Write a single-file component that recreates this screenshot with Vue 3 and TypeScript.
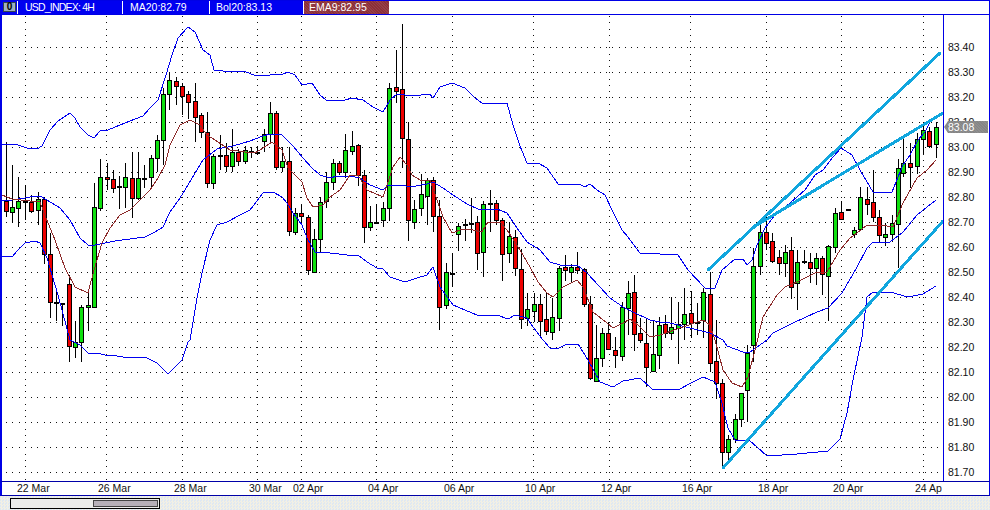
<script setup lang="ts">
type Kind = 'g' | 'r' | 'd'
type Candle = [number, number, number, number, number, Kind]

const candles: Candle[] = [
  [6,201,211,142,217,'r'],[12,207,212,165,223,'g'],[18,201,208,177,227,'g'],[25,201,202,185,220,'d'],[31,202,211,195,213,'r'],[38,199,210,192,225,'g'],
  [44,199,254,197,264,'r'],[50,254,302,233,318,'r'],[56,302,303,289,321,'d'],[62,303,304,303,326,'d'],[69,284,346,275,362,'r'],[75,342,347,321,358,'g'],
  [81,307,342,305,362,'g'],[88,305,307,293,331,'g'],[94,207,307,183,308,'g'],[100,177,208,159,211,'g'],[107,177,179,163,190,'r'],[113,179,188,170,193,'r'],
  [119,186,187,176,209,'d'],[125,177,187,163,208,'g'],[132,178,198,152,218,'r'],[138,178,198,152,200,'g'],[144,178,179,165,188,'d'],[151,158,177,155,188,'g'],
  [157,140,158,135,172,'g'],[163,94,140,88,165,'g'],[169,80,94,72,110,'g'],[176,81,86,77,105,'r'],[182,86,96,83,115,'r'],[188,94,102,91,119,'r'],
  [195,101,117,83,142,'r'],[201,115,132,113,138,'r'],[207,132,183,112,188,'r'],[213,156,183,154,189,'g'],[220,155,156,135,170,'d'],[226,155,166,143,172,'r'],
  [232,152,166,129,172,'g'],[238,152,161,149,166,'r'],[245,150,161,146,164,'g'],[251,151,152,147,158,'d'],[257,152,153,146,155,'d'],[264,134,141,129,152,'g'],
  [270,113,134,102,143,'g'],[276,113,167,111,170,'r'],[282,161,167,147,172,'g'],[289,161,231,147,236,'r'],[295,213,232,208,235,'g'],[301,213,216,205,223,'r'],
  [308,217,270,215,275,'r'],[314,239,272,229,273,'g'],[320,202,239,197,253,'g'],[326,182,201,172,208,'g'],[333,163,182,159,190,'g'],[339,163,172,161,175,'r'],
  [345,150,172,134,178,'g'],[352,146,151,131,155,'g'],[358,145,175,144,186,'r'],[364,175,227,170,243,'r'],[370,222,227,206,231,'g'],[376,222,223,204,223,'d'],
  [383,208,220,202,227,'g'],[389,88,208,83,221,'g'],[396,87,91,50,103,'r'],[402,89,138,24,168,'r'],[408,139,220,122,241,'r'],[414,209,222,200,229,'g'],
  [421,194,208,174,216,'g'],[427,180,196,178,225,'g'],[433,180,216,177,232,'r'],[439,216,307,200,330,'r'],[446,272,305,263,309,'g'],[452,273,274,253,287,'d'],
  [458,226,234,223,251,'g'],[465,224,225,219,241,'d'],[471,223,224,198,233,'d'],[477,222,253,216,270,'r'],[483,204,252,201,277,'g'],[490,203,204,190,232,'d'],
  [496,203,220,200,225,'r'],[502,220,254,218,281,'r'],[509,236,253,222,263,'g'],[515,237,268,230,276,'r'],[521,269,319,249,329,'r'],[527,309,318,293,326,'g'],
  [534,304,311,293,322,'g'],[540,304,321,294,337,'r'],[546,319,331,293,335,'r'],[552,317,332,298,340,'g'],[559,268,318,266,331,'g'],[565,267,270,255,281,'r'],
  [571,267,272,264,283,'g'],[577,267,270,252,274,'r'],[584,269,304,268,307,'r'],[590,304,378,296,380,'r'],[596,358,381,325,381,'g'],[602,333,358,328,367,'g'],
  [608,333,349,322,350,'r'],[615,350,355,337,368,'r'],[622,307,356,302,361,'g'],[628,293,308,281,335,'g'],[634,292,334,275,351,'r'],[640,333,340,318,343,'r'],
  [646,343,367,318,387,'r'],[653,354,371,320,371,'g'],[659,325,355,317,369,'g'],[665,324,333,315,338,'r'],[671,327,333,297,340,'g'],[678,324,328,302,364,'g'],
  [684,314,324,288,340,'g'],[691,313,323,291,338,'r'],[697,322,323,303,335,'d'],[703,292,320,288,338,'g'],[710,294,363,272,372,'r'],[716,361,383,320,399,'r'],
  [722,383,452,379,468,'r'],[728,439,452,435,461,'g'],[735,419,439,414,443,'g'],[741,393,419,393,427,'g'],[747,353,390,345,422,'g'],[753,266,345,248,362,'g'],
  [760,232,266,225,275,'g'],[766,232,243,213,250,'r'],[772,241,261,233,263,'r'],[779,257,263,250,275,'r'],[785,252,263,245,277,'g'],[791,250,287,237,299,'r'],
  [797,262,283,250,310,'g'],[804,261,262,250,264,'d'],[810,262,268,253,283,'r'],[816,258,268,253,285,'g'],[822,258,274,256,295,'r'],[828,246,276,245,321,'g'],
  [835,213,247,208,253,'g'],[841,212,219,201,220,'r'],[848,209,210,209,210,'d'],[854,230,234,227,238,'g'],[860,197,229,187,230,'g'],[867,199,204,187,215,'r'],
  [873,202,217,170,222,'r'],[879,217,235,210,242,'r'],[885,234,237,223,246,'g'],[892,223,234,215,242,'g'],[898,168,224,159,268,'g'],[903,163,173,139,177,'g'],
  [910,163,167,143,188,'r'],[917,139,166,133,174,'g'],[923,130,139,126,154,'g'],[929,131,146,127,148,'r'],[936,127,144,122,158,'g'],
]

const upper = '2,144 15,144 27,148 37,149 42,146 50,130 58,121 64,117 70,113 75,118 80,127 88,135 94,138 100,131 108,130 120,125 130,121 143,116 150,108 158,100 166,75 172,55 178,38 188,27 195,32 203,50 210,55 214,70 223,71 243,71 257,76 270,75 283,74 288,72 295,75 302,85 312,83 320,95 326,100 345,100 352,98 363,100 373,107 383,112 390,100 397,94 412,96 430,94 433,98 440,87 452,83 465,88 475,98 482,103 507,103 513,125 520,146 527,163 538,163 547,168 558,184 579,184 585,187 590,184 597,190 605,195 613,212 622,230 628,237 640,253 660,254 678,255 688,270 705,288 715,288 722,270 735,259 743,259 747,265 752,260 757,245 765,228 775,215 790,203 805,190 815,175 823,170 833,157 841,148 852,155 860,170 873,192 892,192 898,177 903,165 910,155 918,140 925,132 930,122'
const middle = '2,200 12,200 25,198 35,196 40,196 47,200 60,208 70,220 80,238 88,245 95,245 105,243 115,241 130,239 145,237 155,232 163,227 170,212 180,198 197,170 203,160 217,149 233,146 250,141 263,136 270,134 282,135 293,146 303,158 312,168 320,175 330,178 337,176 350,176 360,178 370,185 383,190 388,185 402,185 410,187 427,184 433,182 443,188 453,195 467,204 480,210 487,209 497,209 507,213 517,228 527,242 540,250 550,262 560,265 577,265 587,273 600,287 610,298 623,307 633,312 650,320 660,322 670,323 710,333 723,340 727,346 743,352 750,352 767,340 773,333 793,323 817,312 828,308 842,293 857,267 867,248 873,242 890,242 903,232 917,215 927,207 936,200'
const lower = '2,256 12,257 18,250 25,243 35,241 40,243 47,258 58,295 70,340 80,345 88,353 97,353 105,355 117,356 123,357 147,358 157,363 168,374 182,360 188,342 190,340 197,298 202,273 210,240 217,225 227,222 240,215 250,210 263,193 273,192 282,197 287,203 293,213 302,225 307,238 315,252 330,253 347,255 358,255 367,262 377,268 383,269 390,277 405,282 417,278 427,275 433,267 440,287 453,305 477,315 497,315 508,319 515,315 527,318 533,327 543,340 550,348 557,349 567,344 578,344 588,360 600,382 613,387 623,381 640,378 652,389 678,390 693,382 703,377 715,382 722,403 728,428 735,440 750,441 757,447 767,456 797,454 828,451 840,439 847,413 853,380 862,337 867,297 873,292 890,292 908,297 923,294 936,286'
const ema = '2,195 12,199 30,201 40,202 46,218 55,240 65,268 75,287 88,293 94,270 102,243 110,228 120,215 130,210 140,200 150,190 158,178 165,165 170,145 180,125 190,120 200,125 207,135 215,140 230,150 245,152 255,153 263,148 272,142 282,150 288,168 302,182 307,198 313,207 323,205 330,197 340,190 350,175 358,175 367,190 383,197 393,167 400,157 407,165 412,175 420,180 430,180 437,200 443,217 452,233 463,229 473,230 482,232 488,222 500,222 507,230 520,250 530,267 538,282 547,293 553,297 563,287 577,280 583,287 593,312 607,323 613,328 623,323 630,319 638,325 650,337 660,335 683,327 703,320 710,325 715,340 723,370 732,383 742,387 748,377 755,350 763,317 777,295 785,287 797,282 817,272 827,272 840,250 850,238 857,233 867,225 880,225 893,227 903,203 917,178 927,170 936,160'

const trends = [
  [708, 270, 940, 53],
  [757, 225, 943, 113],
  [723, 468, 943, 221],
]

const gridX = [25, 106, 182, 257, 301, 376, 452, 533, 609, 690, 766, 841, 923]
const gridY = Array.from({ length: 18 }, (_, i) => 47 + i * 25)

const prices = Array.from({ length: 18 }, (_, i) => (83.4 - i * 0.1).toFixed(2))

const dates = ['22 Mar', '26 Mar', '28 Mar', '30 Mar', '02 Apr', '04 Apr', '06 Apr', '10 Apr', '12 Apr', '16 Apr', '18 Apr', '20 Apr', '24 Ap']
const dateCells = dates.map((label, i) => ({
  label,
  width: (i < gridX.length - 1 ? gridX[i + 1] - gridX[i] : 29) + 'px',
}))
</script>

<template>
  <div class="window">
    <header class="header">
      <div class="tabs">
        <span class="zero">0</span>
        <span class="tab symbol">USD_INDEX: 4H</span>
        <span class="tab ma">MA20:82.79</span>
        <span class="tab bol">Bol20:83.13</span>
        <span class="tab ema">EMA9:82.95</span>
      </div>
    </header>

    <div class="main">
      <svg class="plot" width="941" height="466" viewBox="2 15 941 466">
        <g class="grid">
          <line v-for="x in gridX" :key="'x' + x" :x1="x + 0.5" :x2="x + 0.5" y1="16" y2="481" />
          <line v-for="y in gridY" :key="'y' + y" :y1="y + 0.5" :y2="y + 0.5" x1="6" x2="941" />
        </g>
        <g v-for="c in candles" :key="c[0]">
          <line class="wick" :x1="c[0] + 0.5" :x2="c[0] + 0.5" :y1="c[3]" :y2="c[4]" />
          <rect v-if="c[5] === 'd'" class="doji" :x="c[0] - 2" :y="c[1]" width="5" height="2" />
          <rect
            v-else
            :class="c[5] === 'g' ? 'up' : 'down'"
            :x="c[0] - 1.5"
            :y="c[1] + 0.5"
            width="4"
            :height="c[2] - c[1]"
          />
        </g>
        <polyline class="band" :points="upper" />
        <polyline class="band" :points="middle" />
        <polyline class="band" :points="lower" />
        <polyline class="ema-line" :points="ema" />
        <line
          v-for="t in trends"
          :key="t[0]"
          class="trend"
          :x1="t[0]"
          :y1="t[1]"
          :x2="t[2]"
          :y2="t[3]"
        />
      </svg>
      <div class="axis">
        <span v-for="p in prices" :key="p" class="price">{{ p }}</span>
        <div class="flag">83.08</div>
      </div>
    </div>

    <div class="dates">
      <span v-for="d in dateCells" :key="d.label" class="date" :style="{ width: d.width }">{{ d.label }}</span>
    </div>

    <div class="footer">
      <div class="scrollbar"><div class="thumb"></div></div>
    </div>
  </div>
</template>

<style>
html, body { margin: 0; background: #fff; }
</style>

<style scoped>
.window {
  width: 990px;
  height: 510px;
  display: flex;
  flex-direction: column;
  overflow: hidden;
  background: #fff;
  font-family: "Liberation Sans", Arial, sans-serif;
  font-size: 10.5px;
  color: #000;
}
.header {
  height: 15px;
  box-sizing: border-box;
  flex: none;
  border-top: 1px solid #0000e6;
  border-bottom: 1px solid #0000e6;
  border-left: 2px solid #0000e6;
  border-right: 1px solid #0000e6;
  background: #fff;
}
.tabs {
  width: 387px;
  height: 13px;
  display: flex;
  align-items: stretch;
  background: #0000f0;
  color: #fff;
  line-height: 13px;
}
.zero {
  width: 13px;
  height: 10px;
  margin: 1px 1px 0 1px;
  background: #9fb0c0;
  border: 1px solid #33424f;
  box-sizing: border-box;
  color: #000;
  font-weight: bold;
  font-size: 10px;
  line-height: 8px;
  text-align: center;
}
.tab {
  box-sizing: border-box;
  white-space: nowrap;
  border-left: 1px solid #fff;
}
.symbol { width: 105px; padding-left: 7px; letter-spacing: -0.8px; }
.ma { width: 87px; padding-left: 7px; }
.bol { width: 94px; padding-left: 6px; }
.ema {
  flex: 1;
  padding-left: 5px;
  background-color: #8c2f38;
  background-image: repeating-linear-gradient(45deg, rgba(255, 255, 255, 0.08) 0 1px, transparent 1px 2px);
}
.main {
  flex: none;
  height: 466px;
  display: flex;
  border-left: 2px solid #0000e6;
  border-right: 1px solid #0000e6;
}
.plot {
  flex: none;
  display: block;
  border-right: 1px solid #0000e6;
}
.grid line {
  stroke: #111;
  stroke-width: 1;
  stroke-dasharray: 1 5.25;
  shape-rendering: crispEdges;
}
.wick {
  stroke: #000;
  stroke-width: 1;
  shape-rendering: crispEdges;
}
.doji { fill: #000; shape-rendering: crispEdges; }
.up, .down {
  stroke: #000;
  stroke-width: 1;
  shape-rendering: crispEdges;
}
.up { fill: #0fe00f; }
.down { fill: #ee0000; }
.band, .ema-line {
  fill: none;
  stroke-width: 1;
  shape-rendering: crispEdges;
}
.band { stroke: #0000f0; }
.ema-line { stroke: #8c2a2a; }
.trend {
  stroke: #10a6de;
  stroke-width: 3;
  stroke-linecap: round;
  shape-rendering: crispEdges;
}
.axis {
  flex: 1;
  position: relative;
  display: flex;
  flex-direction: column;
  padding: 20px 0 0 4px;
  box-sizing: border-box;
}
.price {
  height: 25px;
  flex: none;
  line-height: 25px;
  color: #111;
}
.flag {
  position: absolute;
  left: 0;
  top: 106px;
  width: 44px;
  height: 12px;
  padding-left: 4px;
  box-sizing: border-box;
  background-color: #858585;
  background-image: repeating-linear-gradient(45deg, rgba(255, 255, 255, 0.08) 0 1px, transparent 1px 2px);
  color: #fff;
  line-height: 12px;
  clip-path: polygon(0 50%, 4px 0, 100% 0, 100% 100%, 4px 100%);
}
.dates {
  flex: none;
  height: 15px;
  box-sizing: border-box;
  display: flex;
  padding-left: 15px;
  border-top: 1px solid #0000a8;
  border-bottom: 1px solid #0000a8;
  border-left: 2px solid #0000e6;
  border-right: 1px solid #0000e6;
  line-height: 13px;
  background: #fff;
}
.date {
  flex: none;
  white-space: nowrap;
  overflow: hidden;
  color: #111;
}
.footer {
  flex: 1;
  display: flex;
  align-items: center;
  padding-left: 10px;
  background-color: #e6ebee;
  background-image:
    repeating-conic-gradient(#f3f0e4 0 25%, #dfe8f2 0 50%);
  background-size: 3px 3px;
}
.scrollbar {
  width: 150px;
  height: 11px;
  box-sizing: border-box;
  border: 1px solid #000;
  display: flex;
  justify-content: flex-end;
  padding: 1px;
  background: #ececea;
}
.thumb {
  width: 65px;
  background: #b7b0b8;
  border: 1px solid #444;
  box-sizing: border-box;
}
</style>
